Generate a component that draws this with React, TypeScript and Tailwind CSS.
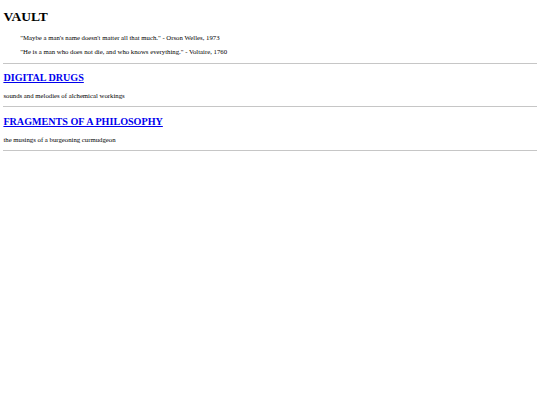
import React from 'react';

const serif = { fontFamily: '"Liberation Serif", "Times New Roman", serif' };

const sections = [
  { title: 'DIGITAL DRUGS', blurb: 'sounds and melodies of alchemical workings' },
  { title: 'FRAGMENTS OF A PHILOSOPHY', blurb: 'the musings of a burgeoning curmudgeon' },
];

function Rule() {
  return <div className="h-px bg-[#c6c6c6]" />;
}

export default function App() {
  return (
    <div
      className="min-h-[405px] bg-white px-[3.4px] pt-[9px] text-black font-['Liberation_Serif',_'Times_New_Roman',_serif]"
      style={serif}
    >
      {/* title */}
      <h1 className="text-[13.5px] font-bold leading-[15.5px]">VAULT</h1>

      {/* quotes */}
      <div className="mt-[9px] ml-[16.9px] flex flex-col gap-[6.75px] text-[6.75px] leading-[7.76px]">
        <p>"Maybe a man's name doesn't matter all that much." - Orson Welles, 1973</p>
        <p>"He is a man who does not die, and who knows everything." - Voltaire, 1760</p>
      </div>

      <div className="mt-[6.75px]">
        <Rule />
      </div>

      {sections.map((s) => (
        <div key={s.title}>
          <h2 className="mt-[8.4px] text-[10.125px] font-bold leading-[11.63px]">
            <a href="#" className="text-[#0000ee] underline">
              {s.title}
            </a>
          </h2>
          <p className="mt-[8.4px] text-[6.75px] leading-[7.76px]">{s.blurb}</p>
          <div className="mt-[6.75px]">
            <Rule />
          </div>
        </div>
      ))}
    </div>
  );
}
